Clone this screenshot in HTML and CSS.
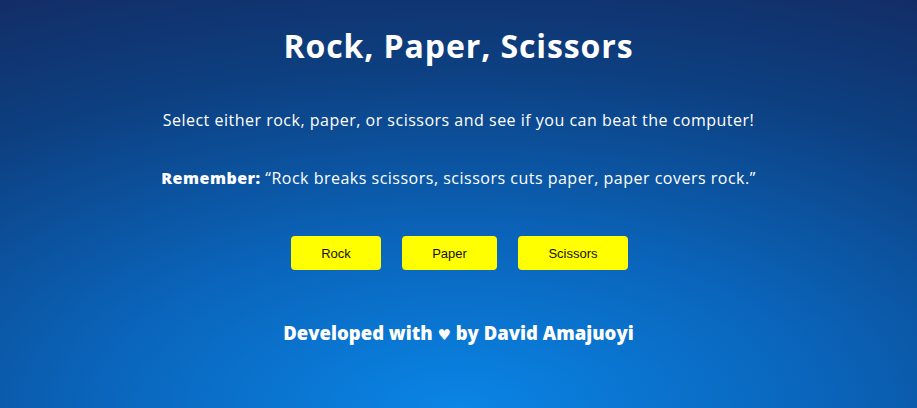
FILE: index.html
```html
<!DOCTYPE html>
<html lang="en">
<head>
<meta charset="utf-8">
<title>Rock, Paper, Scissors</title>
<link rel="stylesheet" href="styles.css">
</head>
<body>
<main class="page">
  <h1 class="title">Rock, Paper, Scissors</h1>
  <p class="intro">Select either rock, paper, or scissors and see if you can beat the computer!</p>
  <p class="rule"><strong>Remember:</strong> “Rock breaks scissors, scissors cuts paper, paper covers rock.”</p>
  <div class="choices">
    <button class="choice choice-rock">Rock</button>
    <button class="choice choice-paper">Paper</button>
    <button class="choice choice-scissors">Scissors</button>
  </div>
  <footer class="credit">Developed with <span class="heart">♥</span> by David Amajuoyi</footer>
</main>
</body>
</html>
```

FILE: styles.css
```css
html, body {
  margin: 0;
  height: 100%;
}

body {
  background: radial-gradient(ellipse 115% 120% at 50% 100%, #0a85e6 0%, #0a64ba 35%, #0d3f80 70%, #142960 100%);
  color: #ffffff;
  font-family: "Open Sans", "DejaVu Sans", sans-serif;
  overflow: hidden;
}

.page {
  display: flex;
  flex-direction: column;
  align-items: center;
  text-align: center;
  padding-top: 23px;
}

.title {
  margin: 0;
  font-size: 32px;
  font-weight: 700;
  line-height: 46px;
  letter-spacing: 0.9px;
}

.intro {
  margin: 38px 0 0;
  font-size: 16px;
  line-height: 26px;
  letter-spacing: 0.5px;
}

.rule {
  margin: 32px 0 0;
  font-size: 16px;
  line-height: 26px;
  letter-spacing: 0.5px;
}

.rule strong {
  font-weight: 800;
}

.choices {
  display: flex;
  gap: 21px;
  margin-top: 45px;
}

.choice {
  height: 34px;
  border: none;
  border-radius: 4px;
  background: #ffff00;
  color: #111111;
  font-family: "Liberation Sans", Arial, sans-serif;
  font-size: 13px;
  padding: 0;
  cursor: pointer;
}

.choice-rock { width: 90px; margin-left: 2px; }
.choice-paper { width: 95px; }
.choice-scissors { width: 110px; }

.credit {
  margin-top: 49px;
  font-size: 18.5px;
  font-weight: 800;
  line-height: 28px;
}

.heart {
  font-size: 15px;
}
```
